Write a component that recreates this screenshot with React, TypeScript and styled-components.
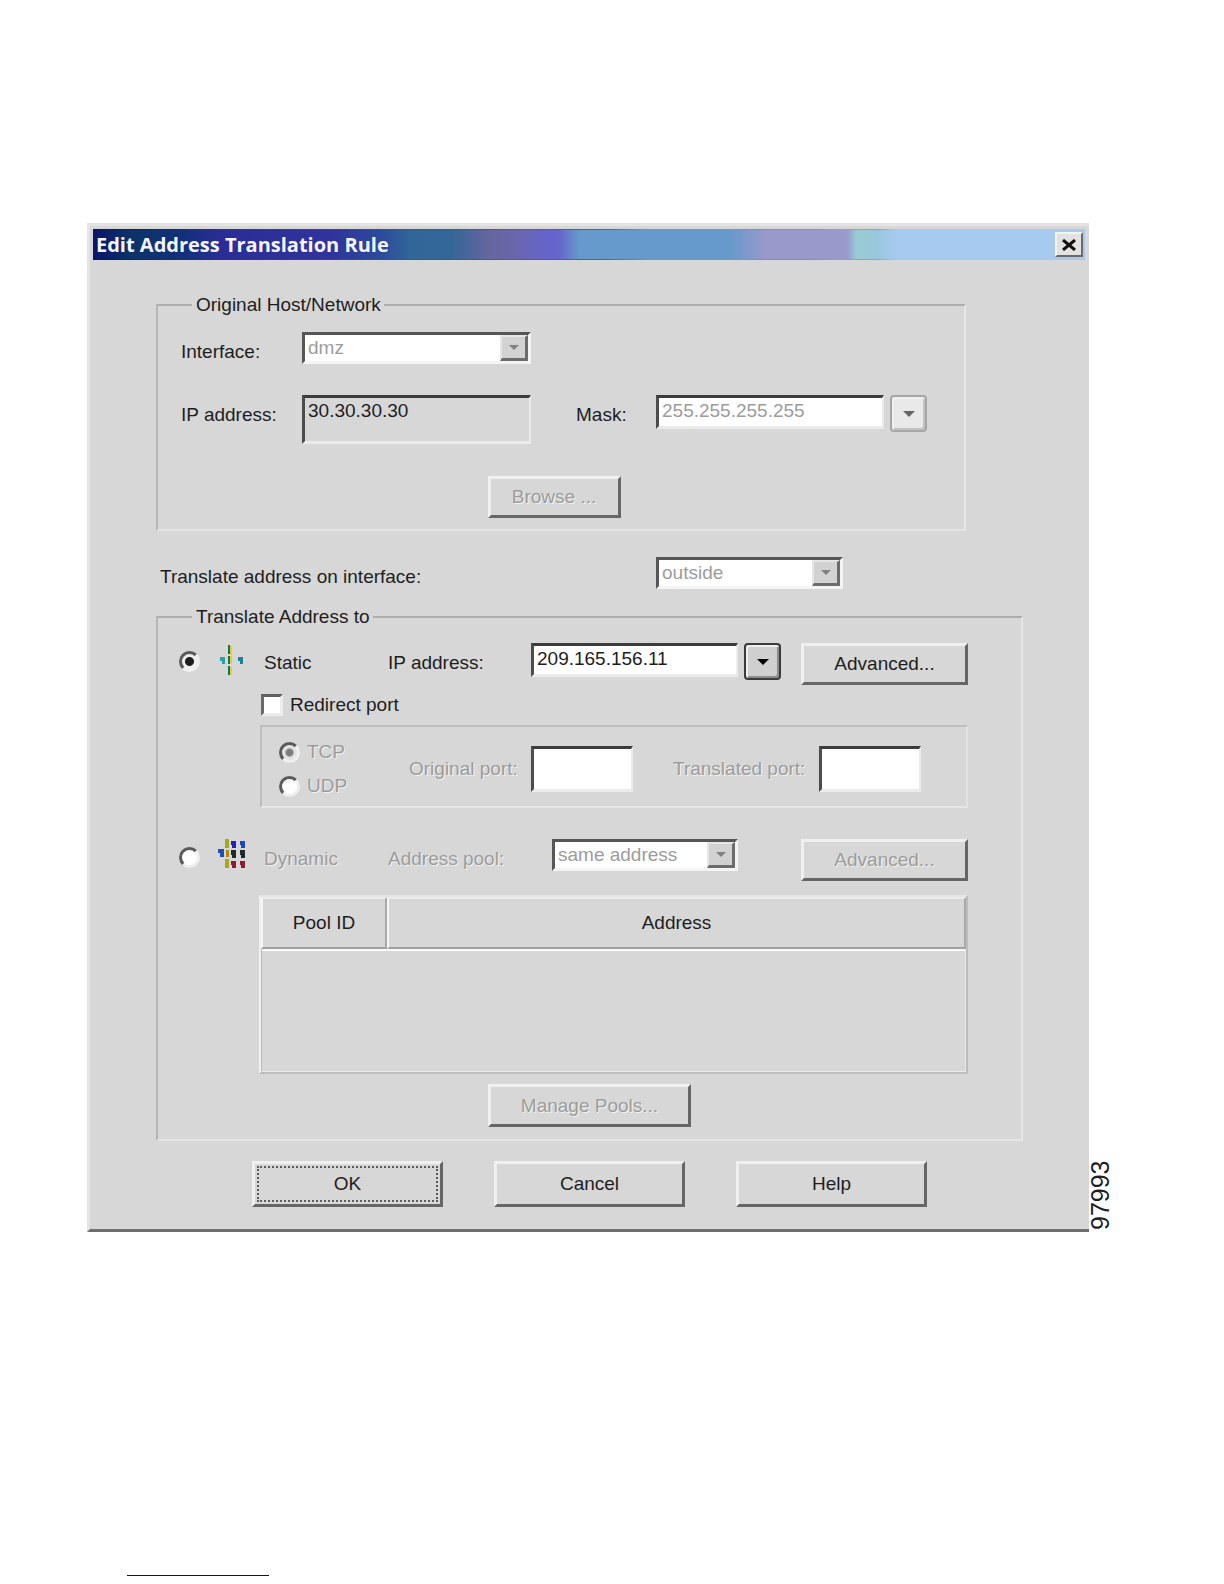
import React from "react";
import styled, { createGlobalStyle, css } from "styled-components";

const sans = '"Liberation Sans", Arial, sans-serif';
const face = "#d7d7d7";
const ink = "#1e1e1e";
const faded = "#9c9c9c";

const GlobalStyle = createGlobalStyle`
  *, *::before, *::after { box-sizing: border-box; }
  body { margin: 0; background: #fff; }
  input, select, button, fieldset, legend, table { font: inherit; color: inherit; margin: 0; }
`;

const etched = css`
  color: ${faded};
  text-shadow: 1px 1px 0 #f2f2f2;
`;

const Page = styled.main`
  padding: 223px 113px 8px 87px;
  font-family: ${sans};
  font-size: 19px;
  line-height: 24px;
  color: ${ink};
`;

const Figure = styled.figure`
  margin: 0;
  display: grid;
  grid-template-columns: minmax(0, 1fr) 22px;
`;

const FigureNumber = styled.figcaption`
  writing-mode: vertical-rl;
  transform: rotate(180deg);
  font-size: 25px;
  line-height: 22px;
  padding-top: 2px;
`;

const Dialog = styled.section`
  background: ${face};
  border: solid;
  border-width: 3px 0 3px 3px;
  border-color: #e4e4e4 transparent #6e6e6e #e4e4e4;
  padding: 3px 4px 0 3px;
`;

const TitleBar = styled.header`
  height: 31px;
  display: flex;
  align-items: center;
  justify-content: space-between;
  padding: 0 2px 0 3px;
  --edge: linear-gradient(90deg, #0a1468, #2b2d96 12%, #4444bb 30%, #5a58cc 52%, #6699cc 56%, #6699cc 72%, #9999cc 75%, #9999cc 79%, #a6caf0 81%);
  background:
    var(--edge) top / 100% 1px no-repeat,
    var(--edge) bottom / 100% 1px no-repeat,
    linear-gradient(
      90deg,
      #0a1468, #0d3368 4%, #12307a 9%, #2b2d96 13%, #30339c 24%, #2c4a9a 29%,
      #32669a 32%, #336699 36%, #66669f 40%, #6a66b0 43%, #6464cc 46%, #6666cc 47%,
      #6699cc 49%, #6699cc 64%, #9999cc 68%, #9999cc 76%, #99ccd5 77%, #99c6dc 79%, #a6caf0 81%
    );
`;

const Title = styled.h1`
  margin: 0;
  font-family: "Open Sans", "Noto Sans", sans-serif;
  font-size: 20px;
  line-height: 24px;
  font-weight: 700;
  color: #f4f4fa;
`;

const CloseButton = styled.button`
  width: 28px;
  height: 25px;
  padding: 0;
  display: grid;
  place-items: center;
  background: #e2e2e0;
  border: 2px solid;
  border-color: #f4f4f4 #6a6a6a #6a6a6a #f4f4f4;
`;

const Body = styled.form`
  padding: 33px 62px 22px 63px;
`;

const Group = styled.fieldset<{ $inset?: number }>`
  min-width: 0;
  padding: 0;
  border: 2px solid;
  border-color: #adadad #e6e6e6 #e4e4e4 #b6b6b6;
  margin-right: ${(p) => p.$inset ?? 0}px;

  > legend {
    height: 24px;
    margin-left: 34px;
    padding: 0 3px 0 4px;
  }
`;

const HostGrid = styled.div`
  padding: 15px 37px 11px 23px;
  display: grid;
  grid-template-columns: 121px minmax(0, 229fr) 125px minmax(0, 228fr) 43px;
  row-gap: 31px;
  align-items: start;
`;

const Label = styled.label<{ $faded?: boolean; $indent?: number }>`
  margin-top: 8px;
  padding-left: ${(p) => p.$indent ?? 0}px;
  white-space: nowrap;
  ${(p) => p.$faded && etched}
`;

const TextBox = styled.input<{ $plain?: boolean; $faded?: boolean }>`
  width: 100%;
  min-width: 0;
  height: ${(p) => (p.$plain ? 49 : 34)}px;
  padding: ${(p) => (p.$plain ? "0 3px 17px" : "0 3px 2px")};
  border: 3px solid;
  border-color: #3c3c3c #ebebeb #ebebeb #4c4c4c;
  border-right-width: 2px;
  border-radius: 0;
  background: ${(p) => (p.$plain ? face : "#fff")};
  color: ${(p) => (p.$faded ? faded : ink)};
  outline: none;
`;

const PortBox = styled(TextBox)`
  height: 46px;
`;

const ArrowButton = styled.button<{ $faded?: boolean }>`
  flex: none;
  width: 37px;
  height: 37px;
  padding: 0;
  display: grid;
  place-items: center;
  border-radius: 4px;
  border: 2px solid ${(p) => (p.$faded ? "#a6a6a6" : "#3a3a3a")};
  background: ${(p) => (p.$faded ? "#e9e9e9" : "#cfcfcf")};
  box-shadow: inset 2px 2px 0 #efefef, inset -2px -2px 0 ${(p) => (p.$faded ? "#c2c2c2" : "#8c8c8c")};
  color: ${(p) => (p.$faded ? "#666" : "#000")};
`;

const MaskArrow = styled.div`
  padding-left: 6px;
`;

const SelectFrame = styled.div`
  position: relative;
  width: 100%;
  height: 32px;
`;

const SelectBox = styled.select`
  appearance: none;
  width: 100%;
  height: 100%;
  padding: 0 34px 0 3px;
  border: 3px solid;
  border-color: #565656 #f4f4f4 #f4f4f4 #565656;
  border-radius: 0;
  background: #fff;
  &:disabled { color: ${faded}; opacity: 1; }
`;

const SelectArrow = styled.span`
  position: absolute;
  top: 3px;
  right: 3px;
  bottom: 3px;
  width: 28px;
  display: grid;
  place-items: center;
  pointer-events: none;
  background: #d2d2d2;
  border: solid;
  border-width: 2px 3px 3px 2px;
  border-color: #e6e6e6 #6c6c6c #6c6c6c #e6e6e6;
  color: #808080;
`;

const PushButton = styled.button<{ $width: number; $height?: number; $focused?: boolean }>`
  width: ${(p) => p.$width}px;
  height: ${(p) => p.$height ?? 42}px;
  padding: 0;
  background: ${face};
  border: 3px solid;
  border-color: #f0f0f0 #666 #666 #f0f0f0;
  ${(p) => p.$focused && "outline: 2px dotted #5c5c5c; outline-offset: -7px;"}
  &:disabled { ${etched} }
`;

const CenterRow = styled.div<{ $top?: number; $bottom?: number; $gap?: number }>`
  grid-column: 1 / -1;
  display: flex;
  justify-content: center;
  gap: ${(p) => p.$gap ?? 0}px;
  padding-top: ${(p) => p.$top ?? 0}px;
  padding-bottom: ${(p) => p.$bottom ?? 0}px;
`;

const InterfaceRow = styled.div`
  display: grid;
  grid-template-columns: minmax(0, 1fr) 187px;
  align-items: start;
  padding: 26px 180px 16px 4px;
`;

const TargetBody = styled.div`
  padding: 14px 53px 10px 21px;
`;

const ModeRow = styled.div`
  display: grid;
  grid-template-columns: 39px 46px 124px 143px minmax(0, 1fr) 167px;
  align-items: start;
`;

const ModeField = styled.div<{ $indent?: number; $trail?: number }>`
  display: flex;
  gap: 6px;
  padding-left: ${(p) => p.$indent ?? 0}px;
  padding-right: ${(p) => p.$trail ?? 20}px;
`;

const Radio = styled.input`
  appearance: none;
  flex: none;
  width: 21px;
  height: 21px;
  margin: 0;
  border: 3px solid;
  border-color: #5a5a5a #efefef #efefef #5a5a5a;
  border-radius: 50%;
  background: #fff;
  &:checked { background: radial-gradient(circle, ${ink} 4px, #eee 5px); }
  &:checked:disabled { background: radial-gradient(circle, #7c7c7c 3px, #e4e4e4 5px); }
`;

const ModeRadio = styled(Radio)`
  margin-top: 8px;
`;

const IconCell = styled.div`
  svg { display: block; }
`;

const CheckRow = styled.label`
  display: flex;
  align-items: center;
  gap: 7px;
  height: 22px;
  margin: 9px 0 9px 82px;
`;

const CheckBox = styled.input`
  appearance: none;
  width: 22px;
  height: 22px;
  margin: 0;
  background: #fff;
  border: 3px solid;
  border-color: #606060 #ececec #ececec #6a6a6a;
`;

const PortPanel = styled.div`
  margin: 0 0 31px 81px;
  border: 2px solid;
  border-color: #bdbdbd #e2e2e2 #e6e6e6 #bdbdbd;
  padding: 8px 45px 3px 17px;
  display: grid;
  grid-template-columns: 130px 122px minmax(0, 1fr) 186px minmax(0, 1fr);
  align-items: center;
`;

const ProtocolList = styled.div`
  display: grid;
  grid-auto-rows: 34px;
`;

const ProtocolOption = styled.label`
  display: flex;
  align-items: center;
  gap: 7px;
  ${etched}
`;

const PortLabel = styled.label<{ $indent?: number }>`
  padding-left: ${(p) => p.$indent ?? 0}px;
  white-space: nowrap;
  ${etched}
`;

const PoolTable = styled.table`
  width: calc(100% - 80px);
  height: 179px;
  margin: 14px 0 0 80px;
  table-layout: fixed;
  border-collapse: separate;
  border-spacing: 0;
  border: 2px solid;
  border-color: #e4e4e4 #bcbcbc #bcbcbc #f0f0f0;

  th {
    height: 52px;
    padding: 0;
    font-weight: 400;
    border: 2px solid;
    border-color: #ececec #a8a8a8 #a0a0a0 #f6f6f6;
    box-shadow: 0 2px 0 #fafafa;
  }
  th:first-child { width: 126px; }
  td {
    padding: 0;
    border: solid;
    border-width: 0 1px 1px;
    border-color: #e8e8e8 #e8e8e8 #ebebeb #bcbcbc;
  }
`;

const FooterRule = styled.hr`
  width: 142px;
  height: 1px;
  margin: 343px 0 0 40px;
  border: 0;
  background: #0a0a78;
`;

const Arrow = ({ size }: { size: number }) => (
  <svg width={size} height={size / 2} viewBox="0 0 12 6" aria-hidden="true">
    <path d="M0 0H12L6 6Z" fill="currentColor" />
  </svg>
);

const StaticIcon = () => (
  <svg width="28" height="34" viewBox="-2 0 28 34" aria-hidden="true">
    <path d="M8 2h2v9H8zM8 13h2v8H8zM8 23h2v9H8z" fill="#08785c" />
    <path d="M10 3h2v9h-2zM10 13h2v8h-2zM10 24h2v8h-2z" fill="#e8cf20" />
    <path d="M0 14h5v7H2v-3H0z" fill="#26a3a0" />
    <path d="M18 14h5v7h-3v-3h-2z" fill="#1f7fa0" />
  </svg>
);

const DynamicIcon = () => (
  <svg width="28" height="30" viewBox="0 0 28 30" aria-hidden="true">
    <path d="M7 0h4v9H7zM7 20h4v9H7z" fill="#a6a820" />
    <path d="M8 11h3v7H8z" fill="#b08a10" />
    <path d="M0 10h6v8H2v-4H0z" fill="#1c50b4" />
    <path d="M13 2h5v7h-4v-3h-1z" fill="#2020c0" />
    <path d="M22 2h5v7h-4v-3h-1z" fill="#2048b8" />
    <path d="M13 11h5v8h-4v-3h-1zM22 11h5v8h-4v-3h-1z" fill="#1c2c2c" />
    <path d="M13 22h5v7h-4v-3h-1zM22 22h5v7h-4v-3h-1z" fill="#901838" />
  </svg>
);

const DropDown = ({ id, value }: { id: string; value: string }) => (
  <SelectFrame>
    <SelectBox id={id} disabled defaultValue={value}>
      <option>{value}</option>
    </SelectBox>
    <SelectArrow>
      <Arrow size={10} />
    </SelectArrow>
  </SelectFrame>
);

export default function App() {
  return (
    <Page>
      <GlobalStyle />
      <Figure>
        <Dialog role="dialog" aria-labelledby="dialog-title">
          <TitleBar>
            <Title id="dialog-title">Edit Address Translation Rule</Title>
            <CloseButton type="button" aria-label="Close">
              <svg width="14" height="12" viewBox="0 0 14 12" aria-hidden="true">
                <path d="M1 1L13 11M13 1L1 11" stroke="#111" strokeWidth="3" />
              </svg>
            </CloseButton>
          </TitleBar>

          <Body onSubmit={(e) => e.preventDefault()}>
            <Group $inset={57}>
              <legend>Original Host/Network</legend>
              <HostGrid>
                <Label htmlFor="interface">Interface:</Label>
                <DropDown id="interface" value="dmz" />
                <span />
                <span />
                <span />
                <Label htmlFor="host-ip">IP address:</Label>
                <TextBox id="host-ip" $plain readOnly defaultValue="30.30.30.30" />
                <Label htmlFor="mask" $indent={45}>Mask:</Label>
                <TextBox id="mask" $faded readOnly defaultValue="255.255.255.255" />
                <MaskArrow>
                  <ArrowButton type="button" $faded disabled aria-label="Choose mask">
                    <Arrow size={12} />
                  </ArrowButton>
                </MaskArrow>
                <CenterRow $top={1}>
                  <PushButton type="button" $width={133} disabled>Browse ...</PushButton>
                </CenterRow>
              </HostGrid>
            </Group>

            <InterfaceRow>
              <Label htmlFor="translate-on">Translate address on interface:</Label>
              <DropDown id="translate-on" value="outside" />
            </InterfaceRow>

            <Group>
              <legend>Translate Address to</legend>
              <TargetBody>
                <ModeRow>
                  <ModeRadio type="radio" name="mode" id="mode-static" defaultChecked />
                  <IconCell><StaticIcon /></IconCell>
                  <Label htmlFor="mode-static">Static</Label>
                  <Label htmlFor="static-ip">IP address:</Label>
                  <ModeField>
                    <TextBox id="static-ip" defaultValue="209.165.156.11" />
                    <ArrowButton type="button" aria-label="Choose address">
                      <Arrow size={12} />
                    </ArrowButton>
                  </ModeField>
                  <PushButton type="button" $width={167}>Advanced...</PushButton>
                </ModeRow>

                <CheckRow>
                  <CheckBox type="checkbox" />
                  Redirect port
                </CheckRow>

                <PortPanel>
                  <ProtocolList>
                    <ProtocolOption>
                      <Radio type="radio" name="protocol" defaultChecked disabled />
                      TCP
                    </ProtocolOption>
                    <ProtocolOption>
                      <Radio type="radio" name="protocol" disabled />
                      UDP
                    </ProtocolOption>
                  </ProtocolList>
                  <PortLabel htmlFor="original-port">Original port:</PortLabel>
                  <PortBox id="original-port" disabled />
                  <PortLabel htmlFor="translated-port" $indent={40}>Translated port:</PortLabel>
                  <PortBox id="translated-port" disabled />
                </PortPanel>

                <ModeRow>
                  <ModeRadio type="radio" name="mode" id="mode-dynamic" />
                  <IconCell><DynamicIcon /></IconCell>
                  <Label htmlFor="mode-dynamic" $faded>Dynamic</Label>
                  <Label htmlFor="pool" $faded>Address pool:</Label>
                  <ModeField $indent={21} $trail={63}>
                    <DropDown id="pool" value="same address" />
                  </ModeField>
                  <PushButton type="button" $width={167} disabled>Advanced...</PushButton>
                </ModeRow>

                <PoolTable>
                  <thead>
                    <tr>
                      <th scope="col">Pool ID</th>
                      <th scope="col">Address</th>
                    </tr>
                  </thead>
                  <tbody>
                    <tr>
                      <td colSpan={2} />
                    </tr>
                  </tbody>
                </PoolTable>
              </TargetBody>
              <CenterRow $bottom={12}>
                <PushButton type="button" $width={203} $height={43} disabled>Manage Pools...</PushButton>
              </CenterRow>
            </Group>

            <CenterRow $top={20} $gap={51}>
              <PushButton type="submit" $width={191} $height={46} $focused>OK</PushButton>
              <PushButton type="button" $width={191} $height={46}>Cancel</PushButton>
              <PushButton type="button" $width={191} $height={46}>Help</PushButton>
            </CenterRow>
          </Body>
        </Dialog>
        <FigureNumber>97993</FigureNumber>
      </Figure>
      <FooterRule />
    </Page>
  );
}
